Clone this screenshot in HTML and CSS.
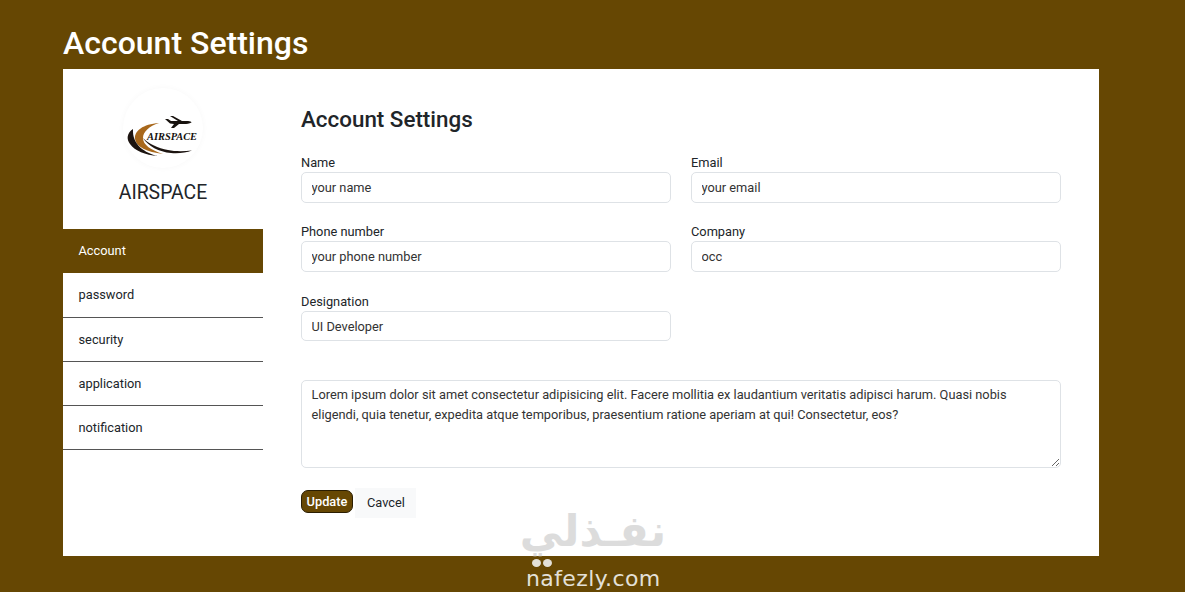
FILE: index.html
```html
<!DOCTYPE html>
<html lang="en">
<head>
    <meta charset="UTF-8">
    <meta name="viewport" content="width=device-width, initial-scale=1.0">
    <title>Account Settings</title>
    <link rel="stylesheet" href="styles.css">
</head>
<body>
    <div class="page">
        <h1 class="page-title">Account Settings</h1>
        <div class="card">
            <aside class="sidebar">
                <div class="brand">
                    <div class="logo">
                        <svg width="80" height="80" viewBox="0 0 80 80">
                            <!-- swooshes -->
                            <path d="M36 35 C20 36 11 43 12 51 C13 59 24 64 40 66 C28 62 20 57 20 50 C20 44 26 38 36 35 Z" fill="#a8681c"/>
                            <path d="M10 41 C4 45 3 51 7 56 C12 63 22 67 35 68 C22 65 9 57 10 41 Z" fill="#1c1410"/>
                            <path d="M20 50 C25 58 36 64 48 65 C55 65.500 63 65 69 62.500 C60 63.500 52 63.500 45 62 C35 60 26 56 20 50 Z" fill="#1c1410"/>
                            <!-- plane -->
                            <path d="M42 31 L45 31 L48 33 L55 33 L47 28 L50 28 L59 33 L65 33 C67 33 68.500 34 68.500 34.500 C66 35.500 64 36 61 36 L56 36 L51 40 L48 40 L51 36 L47 35.500 Z" fill="#17120e"/>
                            <text class="logo-text" x="24" y="52" textLength="50" lengthAdjust="spacingAndGlyphs">AIRSPACE</text>
                        </svg>
                    </div>
                    <h2 class="brand-name">AIRSPACE</h2>
                </div>
                <nav class="side-nav">
                    <a href="#account" class="active">Account</a>
                    <a href="#password">password</a>
                    <a href="#security">security</a>
                    <a href="#application">application</a>
                    <a href="#notification">notification</a>
                </nav>
            </aside>

            <main class="content">
                <h3 class="content-title">Account Settings</h3>
                <form class="form-grid">
                    <div class="field">
                        <label for="name">Name</label>
                        <input id="name" type="text" value="your name">
                    </div>
                    <div class="field">
                        <label for="email">Email</label>
                        <input id="email" type="text" value="your email">
                    </div>
                    <div class="field">
                        <label for="phone">Phone number</label>
                        <input id="phone" type="text" value="your phone number">
                    </div>
                    <div class="field">
                        <label for="company">Company</label>
                        <input id="company" type="text" value="occ">
                    </div>
                    <div class="field">
                        <label for="designation">Designation</label>
                        <input id="designation" type="text" value="UI Developer">
                    </div>
                    <textarea class="bio">Lorem ipsum dolor sit amet consectetur adipisicing elit. Facere mollitia ex laudantium veritatis adipisci harum. Quasi nobis eligendi, quia tenetur, expedita atque temporibus, praesentium ratione aperiam at qui! Consectetur, eos?</textarea>
                    <div class="actions">
                        <button type="button" class="btn-update">Update</button>
                        <button type="button" class="btn-cancel">Cavcel</button>
                    </div>
                </form>
            </main>
        </div>
    </div>

    <div class="watermark">
        <div class="wm-arabic" lang="ar" dir="rtl">نفـذلي</div>
        <div class="wm-dots"><span></span><span></span></div>
        <div class="wm-latin">nafezly.com</div>
    </div>
</body>
</html>
```

FILE: styles.css
```css
* {
    margin: 0;
    padding: 0;
    box-sizing: border-box;
}

html, body {
    height: 100%;
    overflow: hidden;
}

body {
    font-family: Roboto, Arial, sans-serif;
    background: #664703;
    color: #212529;
    position: relative;
}

.page {
    width: 1036px;
    margin-left: 63px;
}

.page-title {
    font-size: 32px;
    font-weight: 500;
    line-height: 38px;
    color: #fff;
    padding-top: 24px;
    height: 69px;
}

.card {
    display: flex;
    height: 487px;
    background: #fff;
}

.sidebar {
    width: 200px;
    flex-shrink: 0;
}

.brand {
    display: flex;
    flex-direction: column;
    align-items: center;
    padding-top: 19px;
    height: 160px;
}

.logo {
    width: 80px;
    height: 80px;
    border-radius: 50%;
    background: #fff;
    box-shadow: 0 0 6px rgba(0, 0, 0, 0.03);
}

.logo-text {
    font-family: "Liberation Serif", serif;
    font-size: 9.5px;
    font-weight: 700;
    font-style: italic;
    fill: #15110e;
}

.brand-name {
    font-size: 19.4px;
    font-weight: 400;
    line-height: 24px;
    margin-top: 13px;
}

.side-nav a {
    display: block;
    height: 44.25px;
    line-height: 43px;
    padding-left: 15.5px;
    font-size: 12.8px;
    color: #212529;
    text-decoration: none;
    border-bottom: 1px solid #555;
}

.side-nav a.active {
    background: #664703;
    color: #fff;
    border-bottom-color: #664703;
}

.content {
    flex: 1;
    padding: 37px 38px 0;
}

.content-title {
    font-size: 22.4px;
    font-weight: 500;
    line-height: 26px;
    margin-bottom: 22.2px;
}

.form-grid {
    display: grid;
    grid-template-columns: 1fr 1fr;
    column-gap: 20px;
    row-gap: 20.45px;
}

.field {
    display: flex;
    flex-direction: column;
}

.field label {
    font-size: 12.8px;
    line-height: 15px;
    height: 18px;
    padding-top: 1px;
}

.field input,
.bio {
    font-family: inherit;
    font-size: 12.8px;
    color: #333;
    border: 1px solid #dee2e6;
    border-radius: 5px;
    background: #fff;
    padding: 0 9.5px;
    width: 100%;
}

.field input {
    height: 30.8px;
}

.bio {
    grid-column: 1 / -1;
    height: 88px;
    margin-top: 18.500px;
    padding: 4px 9.5px;
    line-height: 20px;
}

.actions {
    grid-column: 1 / -1;
    display: flex;
    align-items: flex-start;
    gap: 2px;
    margin-top: -0.5px;
}

.actions button {
    font-family: inherit;
    font-size: 12.8px;
    cursor: pointer;
}

.btn-update {
    width: 52px;
    height: 23px;
    margin-top: 2px;
    font-weight: 500;
    color: #fff;
    background: #664703;
    border: 1px solid #2a1d01;
    border-radius: 7px;
}

.btn-cancel {
    width: 61px;
    height: 30px;
    padding: 0 0 2px 1px;
    color: #212529;
    background: #f8f9fa;
    border: none;
}

/* site watermark, sits over the card bottom */
.watermark {
    position: absolute;
    left: 500px;
    top: 510px;
    width: 190px;
    height: 82px;
    pointer-events: none;
}

.wm-arabic {
    position: absolute;
    left: 8px;
    top: 1px;
    width: 170px;
    text-align: center;
    font-family: "DejaVu Sans", sans-serif;
    font-size: 43px;
    font-weight: 700;
    line-height: 40px;
    color: #dcdcdc;
}

.wm-dots {
    position: absolute;
    left: 32px;
    top: 49px;
    display: flex;
    gap: 2px;
}

.wm-dots span {
    width: 9px;
    height: 8px;
    border-radius: 50%;
    background: #e3e0d8;
}

.wm-latin {
    position: absolute;
    left: 26px;
    top: 56px;
    font-family: "DejaVu Sans", sans-serif;
    font-size: 22px;
    line-height: 26px;
    letter-spacing: 0.4px;
    color: #e3e0d8;
}
```
